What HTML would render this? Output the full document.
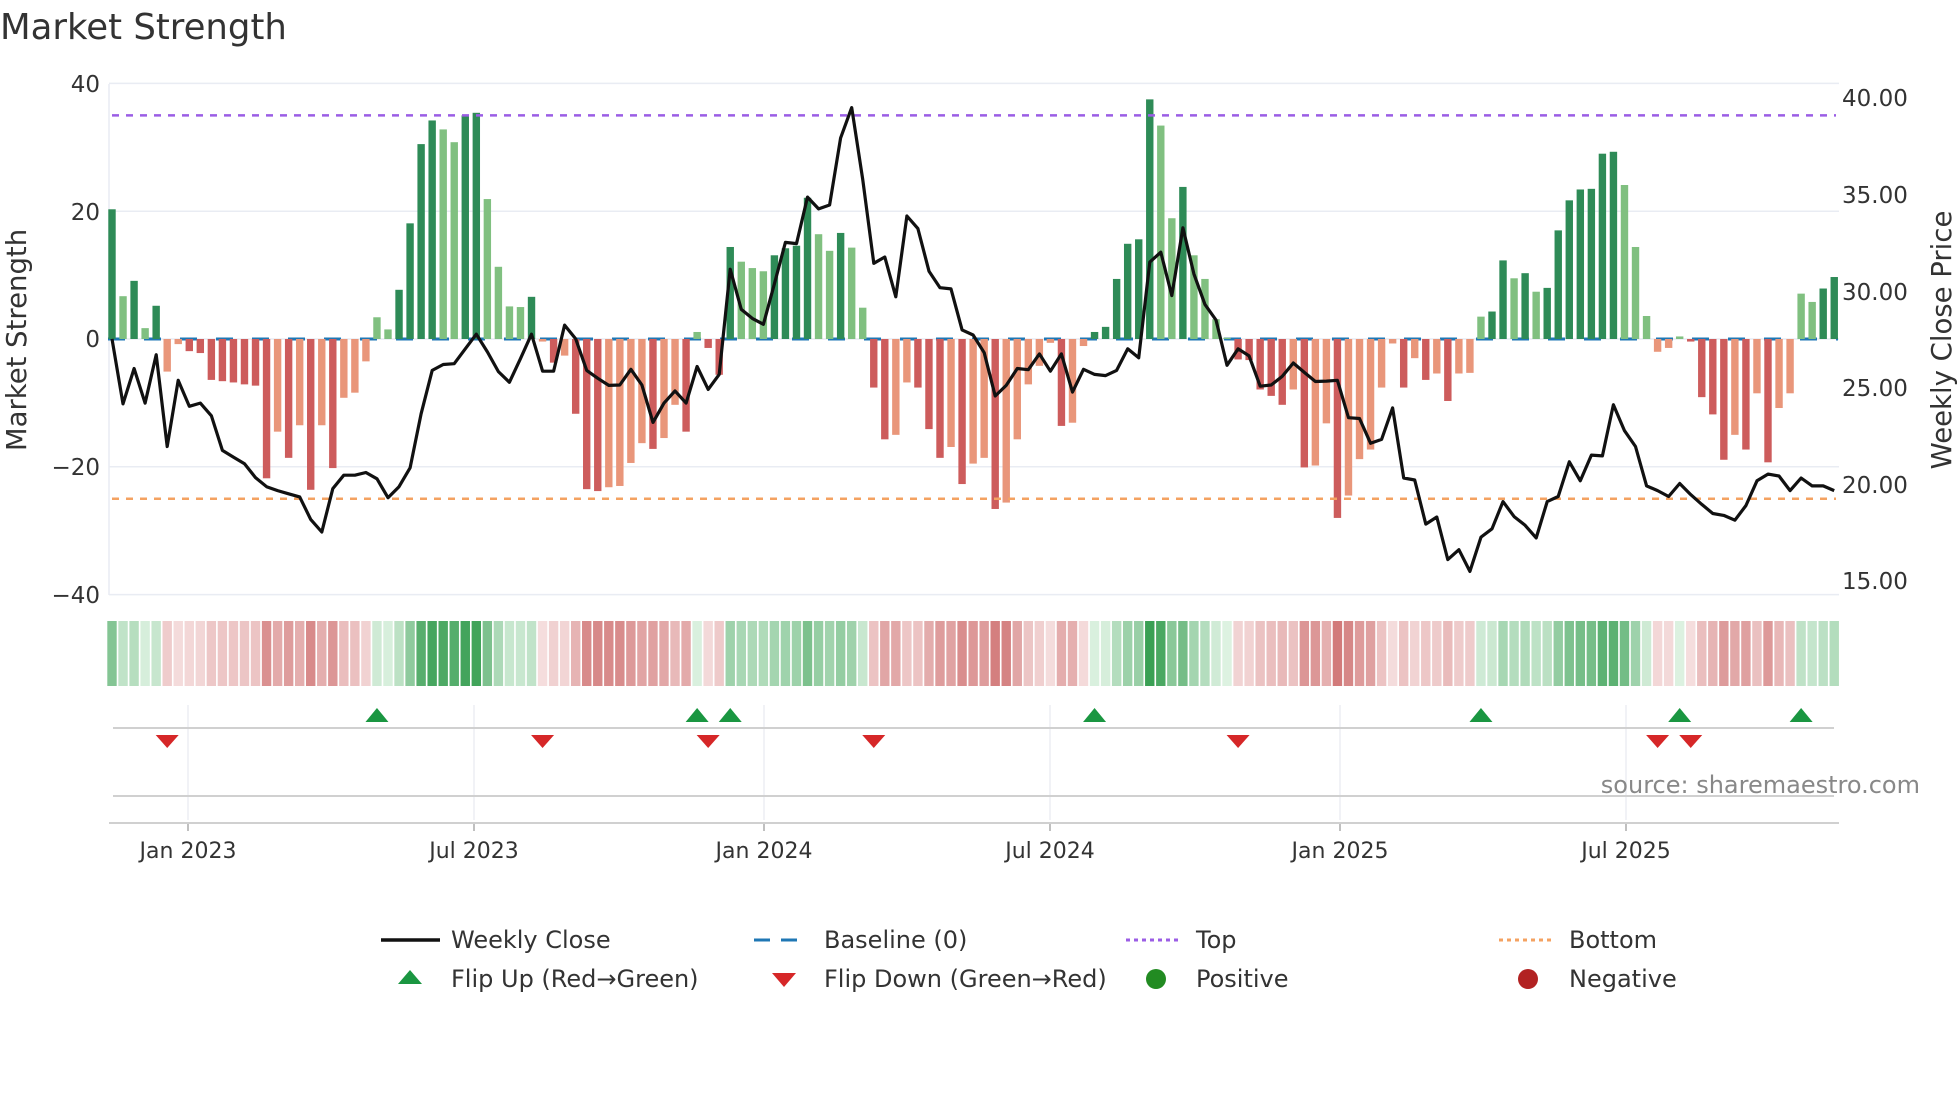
<!DOCTYPE html>
<html><head><meta charset="utf-8">
<style>
html,body{margin:0;padding:0;background:#fff;}
svg{display:block;font-family:"DejaVu Sans","Liberation Sans",sans-serif;}
</style></head>
<body>
<svg id="c" width="1960" height="1102" viewBox="0 0 1960 1102" xmlns="http://www.w3.org/2000/svg">
<rect width="1960" height="1102" fill="#fff"/>
<text x="0" y="39" font-size="35.5" fill="#333">Market Strength</text>
<g id="grid"></g>
<g id="bars"></g>
<g id="strip"></g>
<g id="mk"></g>
<g font-size="23" fill="#333" text-anchor="end">
<text x="100" y="92">40</text>
<text x="100" y="220">20</text>
<text x="100" y="347">0</text>
<text x="100" y="475">−20</text>
<text x="100" y="603">−40</text>
</g>
<g font-size="23" fill="#333">
<text x="1842" y="106">40.00</text>
<text x="1842" y="203">35.00</text>
<text x="1842" y="300">30.00</text>
<text x="1842" y="396">25.00</text>
<text x="1842" y="493">20.00</text>
<text x="1842" y="589">15.00</text>
</g>
<text transform="translate(26,340) rotate(-90)" font-size="27.5" fill="#333" text-anchor="middle">Market Strength</text>
<text transform="translate(1951,340) rotate(-90)" font-size="27.5" fill="#333" text-anchor="middle">Weekly Close Price</text>
<text x="1920" y="793" font-size="24" fill="#888" text-anchor="end">source: sharemaestro.com</text>
<g font-size="22" fill="#333" text-anchor="middle">
<text x="188" y="858">Jan 2023</text>
<text x="474" y="858">Jul 2023</text>
<text x="764" y="858">Jan 2024</text>
<text x="1050" y="858">Jul 2024</text>
<text x="1340" y="858">Jan 2025</text>
<text x="1626" y="858">Jul 2025</text>
</g>
<g font-size="24" fill="#333">
<line x1="381" y1="940" x2="440" y2="940" stroke="#111" stroke-width="3.5"/>
<text x="451" y="948">Weekly Close</text>
<line x1="754" y1="940" x2="806" y2="940" stroke="#1f77b4" stroke-width="3" stroke-dasharray="16 11"/>
<text x="824" y="948">Baseline (0)</text>
<line x1="1126" y1="940" x2="1181" y2="940" stroke="#9b5de5" stroke-width="3" stroke-dasharray="4 4"/>
<text x="1196" y="948">Top</text>
<line x1="1499" y1="940" x2="1554" y2="940" stroke="#f4a261" stroke-width="3" stroke-dasharray="4 4"/>
<text x="1569" y="948">Bottom</text>
<polygon points="410,970 398,984 422,984" fill="#1a9641"/>
<text x="451" y="987">Flip Up (Red→Green)</text>
<polygon points="772,973 796,973 784,987" fill="#d62728"/>
<text x="824" y="987">Flip Down (Green→Red)</text>
<circle cx="1156" cy="979" r="10" fill="#228b22"/>
<text x="1196" y="987">Positive</text>
<circle cx="1528" cy="979" r="10" fill="#b22222"/>
<text x="1569" y="987">Negative</text>
</g>
</svg>
<script>
(function(){
var NS="http://www.w3.org/2000/svg";
function el(p,t,a){var e=document.createElementNS(NS,t);for(var k in a)e.setAttribute(k,a[k]);p.appendChild(e);return e;}
var S=[20.3,6.7,9.1,1.7,5.2,-5.1,-0.8,-1.9,-2.2,-6.4,-6.6,-6.8,-7.1,-7.3,-21.8,-14.5,-18.6,-13.5,-23.6,-13.5,-20.2,-9.2,-8.4,-3.5,3.4,1.5,7.7,18.1,30.5,34.2,32.8,30.8,35,35.4,21.9,11.3,5.1,5,6.6,-0.4,
-3.7,-2.6,-11.7,-23.5,-23.8,-23.2,-23,-19.4,-16.3,-17.2,-15.5,-10.3,-14.5,1.1,-1.4,-5.6,14.4,12.1,11.1,10.6,13.1,14.2,14.6,22.1,16.4,13.8,16.6,14.3,4.9,-7.6,-15.7,-15,-6.8,-7.6,-14.1,-18.6,-16.9,-22.7,-19.5,-18.6,
-26.6,-25.6,-15.7,-7.1,-4.2,-0.6,-13.6,-13.1,-1.1,1.1,1.9,9.4,14.9,15.6,37.5,33.4,18.9,23.8,13.1,9.4,3.1,0.2,-3.2,-3.3,-7.9,-8.9,-10.3,-7.9,-20.1,-19.8,-13.2,-28,-24.5,-18.8,-17.3,-7.6,-0.7,-7.6,-3,-6.4,
-5.4,-9.7,-5.4,-5.3,3.5,4.3,12.3,9.5,10.3,7.4,8,17,21.7,23.4,23.5,29,29.3,24.1,14.4,3.6,-2,-1.4,0.4,-0.4,-9.1,-11.8,-18.9,-15,-17.3,-8.5,-19.3,-10.8,-8.5,7.1,5.8,7.9,9.7];
var P=[655,820,730,818,695,928,760,826,818,850,938,955,972,1007,1030,1040,1048,1056,1113,1145,1035,1001,1001,994,1010,1058,1030,982,845,735,720,718,680,643,688,738,765,705,643,737,
737,620,655,735,755,773,772,732,772,867,818,787,818,725,783,745,478,580,603,618,515,410,413,295,325,315,145,68,250,463,447,548,343,375,483,525,528,632,645,690,
800,773,730,733,693,737,693,790,732,745,748,735,680,703,460,435,545,373,490,568,607,722,680,698,775,772,750,716,740,763,762,760,855,857,920,910,830,1008,1013,1125,
1107,1215,1190,1245,1158,1137,1068,1106,1128,1160,1068,1055,967,1015,950,952,822,888,928,1028,1040,1055,1022,1050,1075,1098,1103,1115,1078,1015,998,1003,1040,1008,1028,1028,1040];
var X0=112,DX=11.04,Y0=339,U=6.39;
var g=document.getElementById('grid');
[40,20,0,-20,-40].forEach(function(v){var y=Y0-v*U;el(g,'line',{x1:109,x2:1839,y1:y,y2:y,stroke:'#e9ecf3','stroke-width':1.5});});
el(g,'line',{x1:109,x2:109,y1:84,y2:595,stroke:'#e9ecf3','stroke-width':1.5});
[188,474,764,1050,1340,1626].forEach(function(x){el(g,'line',{x1:x,x2:x,y1:705,y2:820,stroke:'#eceef3','stroke-width':1.5});el(g,'line',{x1:x,x2:x,y1:823,y2:831,stroke:'#aaa','stroke-width':1.5});});
el(g,'line',{x1:113,x2:1834,y1:728,y2:728,stroke:'#d0d0d0','stroke-width':2});
el(g,'line',{x1:113,x2:1834,y1:796,y2:796,stroke:'#d0d0d0','stroke-width':2});
el(g,'line',{x1:109,x2:1839,y1:823,y2:823,stroke:'#d0d0d0','stroke-width':2});
var b=document.getElementById('bars');
el(b,'line',{x1:108,x2:1838,y1:Y0,y2:Y0,stroke:'#1f77b4','stroke-width':3,'stroke-dasharray':'17 19'});
var W=7.4;
for(var i=0;i<S.length;i++){
 var v=S[i],x=X0+i*DX,dark=(i==0)||Math.abs(v)>=Math.abs(S[i-1]);
 var c=v>=0?(dark?'#2e8b57':'#80c080'):(dark?'#cd5c5c':'#e9967a');
 var h=Math.abs(v)*U;
 el(b,'rect',{x:x-W/2,y:v>=0?Y0-h:Y0,width:W,height:Math.max(h,1),fill:c});
}
el(b,'line',{x1:112,x2:1836,y1:Y0-35*U,y2:Y0-35*U,stroke:'#9b5de5','stroke-width':2.5,'stroke-dasharray':'7 7'});
el(b,'line',{x1:112,x2:1836,y1:Y0+25*U,y2:Y0+25*U,stroke:'#f4a261','stroke-width':2.5,'stroke-dasharray':'7 7'});
var pts=[];for(var i=0;i<P.length;i++){pts.push((X0+i*DX).toFixed(1)+','+(80.85+P[i]*0.394).toFixed(1));}
el(b,'polyline',{points:pts.join(' '),fill:'none',stroke:'#111','stroke-width':3.2,'stroke-linejoin':'round'});
var st=document.getElementById('strip');
function mix(a,b,t){t=Math.max(0,Math.min(1,t));var r=[];for(var k=0;k<3;k++)r.push(Math.round(a[k]+(b[k]-a[k])*t));return 'rgb('+r.join(',')+')';}
for(var i=0;i<S.length;i++){
 var v=S[i],x=X0+i*DX,c;
 if(v>=0)c=mix([222,242,226],[58,160,84],Math.abs(v)/37);
 else c=mix([245,222,222],[210,122,122],Math.abs(v)/28);
 el(st,'rect',{x:x-4.7,y:621,width:9.4,height:65,fill:c});
}
var m=document.getElementById('mk');
[5,39,54,69,102,140,143].forEach(function(i){var x=X0+i*DX;el(m,'polygon',{points:(x-11.5)+',735 '+(x+11.5)+',735 '+x+',748',fill:'#d62728'});});
[24,53,56,89,124,142,153].forEach(function(i){var x=X0+i*DX;el(m,'polygon',{points:(x-11.5)+',722 '+(x+11.5)+',722 '+x+',708',fill:'#1a9641'});});
})();
</script>
</body></html>
